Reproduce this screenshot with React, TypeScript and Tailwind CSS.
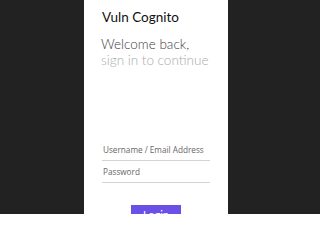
export default function App() {
  return (
    <div className="flex h-[214px] w-[320px] overflow-hidden bg-[#222222]">
      <div className="ml-[84px] flex h-full w-[144px] flex-col bg-white px-[18px] font-['Lato',sans-serif]">
        <h1 className="mt-[9px] text-[13.5px] leading-[16px] text-[#111111]">Vuln Cognito</h1>
        <h2 className="ml-[-1px] mt-[12px] whitespace-nowrap text-[13.5px] font-light leading-[15.5px] text-[#3a3a3a]">
          Welcome back,
          <br />
          <span className="text-[#aaaaaa]">sign in to continue</span>
        </h2>
        <form className="mt-[71px] flex flex-col" onSubmit={(e) => e.preventDefault()}>
          <input
            placeholder="Username / Email Address"
            className="h-[22px] w-full border-b border-[#d4d4d4] bg-transparent px-[1px] font-['Open_Sans',sans-serif] text-[8.2px] outline-none placeholder:text-[#666666]"
          />
          <input
            type="password"
            placeholder="Password"
            className="h-[22px] w-full border-b border-[#d4d4d4] bg-transparent px-[1px] font-['Open_Sans',sans-serif] text-[8.2px] outline-none placeholder:text-[#666666]"
          />
          <button
            type="submit"
            className="mx-auto mt-[22px] h-[20px] w-[50px] bg-[#6a50e6] text-[11px] leading-[20px] text-white"
          >
            Login
          </button>
        </form>
      </div>
    </div>
  );
}
